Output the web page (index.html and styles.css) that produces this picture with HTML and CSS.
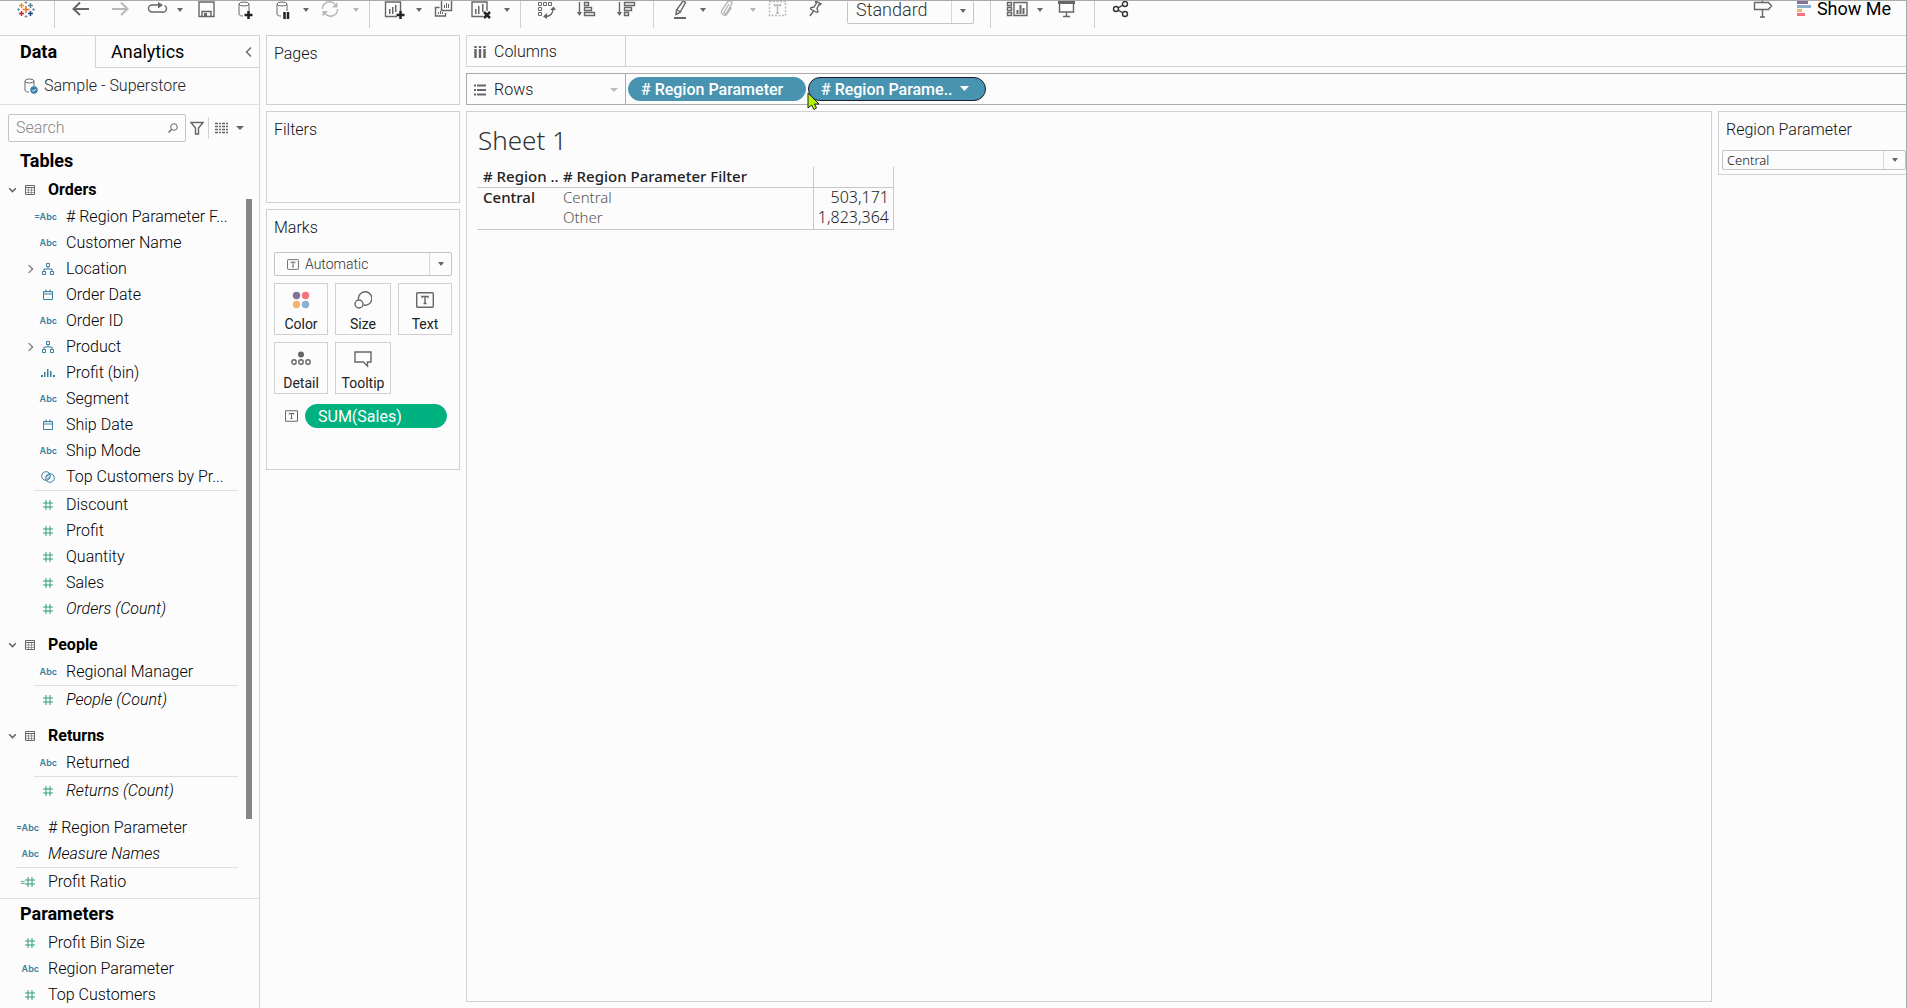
FILE: index.html
```
<!doctype html><html lang="en">
<head><meta charset="utf-8"/><title>Sheet 1</title>
<meta name="viewport" content="width=device-width, initial-scale=1">
<link rel="stylesheet" href="styles.css">
</head>
<body>

<!-- shared icons -->
<svg class="defs" aria-hidden="true">
	<symbol id="caret" viewBox="0 0 12 27"><path d="M2 7h6L5 11z"/></symbol>
	<symbol id="down" viewBox="0 0 8 6"><path d="M1 1l3 3 3-3" class="ln mid"/></symbol>
	<symbol id="table" viewBox="0 0 10 10"><path d="M.5.5h9v9h-9zM.5 2.500h9" class="ln"/><path d="M.5 5h9M.5 7.500h9M3.500 2.500v7M6.500 2.500v7" class="ln thin"/></symbol>
	<symbol id="hash" viewBox="0 0 12 12"><path d="M4 1v10M8 1v10M1 4h10M1 8h10" class="ln"/></symbol>
	<symbol id="date" viewBox="0 0 12 12"><path d="M1.500 2.500h9v8h-9zM1.500 5h9M4 .5v3M8 .5v3" class="ln"/></symbol>
	<symbol id="tree" viewBox="0 0 12 12"><path d="M4.500.5h3v3h-3zM.5 8.500h3v3h-3zM8.500 8.500h3v3h-3zM6 3.500V6M2 8.500V6h8v2.500" class="ln"/></symbol>
	<symbol id="bin" viewBox="0 0 14 12"><path d="M0 8h2v2H0zM3 5h1.500v5H3zM6 2h1.500v8H6zM9 4h1.500v6H9zM12 8h2v2h-2z"/></symbol>
	<symbol id="set" viewBox="0 0 14 12"><circle cx="5" cy="5" r="4.300" class="ln"/><circle cx="9" cy="7" r="4.300" class="ln"/><path d="M5 6l4-3M5.500 8.500l4-3" class="ln"/></symbol>
	<symbol id="txt" viewBox="0 0 18 16"><rect x=".7" y=".7" width="16.600" height="14.600" rx="1" class="ln mid"/><path d="M6 6V4.500h6V6M9 4.500v7M7.500 11.500h3" class="ln mid"/></symbol>
</svg>

<header class="toolbar">
	<div class="logo">
		<svg width="18" height="27" viewBox="0 0 18 27">
			<path d="M9 5v7M5.500 8.500h7" stroke="#e8762c" stroke-width="1.600"/>
			<path d="M4.500 2v5M2 4.500h5" stroke="#eb912c" stroke-width="1.500"/>
			<path d="M13.500 2v5M11 4.500h5" stroke="#5b879b" stroke-width="1.500"/>
			<path d="M4.500 10v5M2 12.500h5" stroke="#c72035" stroke-width="1.500"/>
			<path d="M13.500 10v5M11 12.500h5" stroke="#1f457e" stroke-width="1.500"/>
			<path d="M9 0v3M7.500 1.500h3M9 14v3M7.500 15.500h3M1.500 7v3M0 8.500h3M16.500 7v3M15 8.500h3" stroke="#7199a6"/>
		</svg>
	</div>
	<div class="group">
		<button type="button" class="tool" aria-label="Undo"><svg viewBox="0 0 38 27"><path d="M28 8H13M19 1.500L12.500 8l6.500 6" class="ln thick"/></svg></button>
		<button type="button" class="tool off" aria-label="Redo"><svg viewBox="0 0 38 27"><path d="M13 8h15M22 1.500L28.500 8 22 14" class="ln thick"/></svg></button>
		<button type="button" class="tool" aria-label="Replay"><svg viewBox="0 0 38 27"><path d="M23 4h-8a3.500 3.500 0 0 0 0 7h10a3.500 3.500 0 0 0 2.500-6.500" class="ln mid"/><path d="M21 1l5 3-5 3.500z"/></svg></button>
		<button type="button" class="more" aria-label="More"><svg viewBox="0 0 12 27"><use href="#caret"/></svg></button>
		<button type="button" class="tool" aria-label="Save"><svg viewBox="0 0 38 27"><path d="M12 1h15v14.500H12zM15 15.500v-5h9v5" class="ln mid"/><path d="M17 12h3v3h-3z"/></svg></button>
		<button type="button" class="tool" aria-label="New data source"><svg viewBox="0 0 38 27"><ellipse cx="19" cy="3" rx="5" ry="2" class="ln"/><path d="M14 3v10c0 1.500 2 2 4 2M24 3v7" class="ln"/><path d="M23.500 10v8M19.500 14h8" class="bold"/></svg></button>
		<button type="button" class="tool" aria-label="Pause updates"><svg viewBox="0 0 38 27"><ellipse cx="19" cy="3" rx="5" ry="2" class="ln"/><path d="M14 3v10c0 1.500 2 2 4 2M24 3v7" class="ln"/><path d="M21.500 11v7M25 11v7" class="bold"/></svg></button>
		<button type="button" class="more" aria-label="More"><svg viewBox="0 0 12 27"><use href="#caret"/></svg></button>
		<button type="button" class="tool off" aria-label="Refresh"><svg viewBox="0 0 38 27"><path d="M9.500 8a7 7 0 0 1 12.500-4.500M24.500 8a7 7 0 0 1-12.500 4.500" class="ln mid"/><path d="M24.500 1v5.500H19zM9.500 15.500V10H15z"/></svg></button>
		<button type="button" class="more off" aria-label="More"><svg viewBox="0 0 12 27"><use href="#caret"/></svg></button>
	</div>
	<div class="group">
		<button type="button" class="tool" aria-label="New worksheet"><svg viewBox="0 0 38 27"><path d="M21 15.500H9.500V1h15v9" class="ln mid"/><path d="M13 8h1.500v5H13zM16 6h1.500v7H16zM19 4h1.500v7H19z"/><path d="M24.500 10v8M20.500 14h8" class="bold"/></svg></button>
		<button type="button" class="more" aria-label="More"><svg viewBox="0 0 12 27"><use href="#caret"/></svg></button>
		<button type="button" class="tool" aria-label="Duplicate"><svg viewBox="0 0 38 27"><path d="M15.500 0v9.500h10V0M13.500 6.500h-4v8.500h10v-3" class="ln mid"/><path d="M18 4h1v3h-1zM20 2h1v5h-1zM22 3h1v4h-1zM12 11h1v2h-1zM14 10h1v3h-1zM16 11h1v2h-1z"/></svg></button>
		<button type="button" class="tool" aria-label="Clear sheet"><svg viewBox="0 0 38 27"><path d="M19 15.500H8V1h15v9" class="ln mid"/><path d="M11 8h1.500v5H11zM14 5h1.500v8H14zM18 3h1.500v8H18z"/><path d="M20 11l6 6M26 11l-6 6" class="bold"/></svg></button>
		<button type="button" class="more" aria-label="More"><svg viewBox="0 0 12 27"><use href="#caret"/></svg></button>
	</div>
	<div class="group wide">
		<button type="button" class="tool" aria-label="Swap rows and columns"><svg viewBox="0 0 40 27"><path d="M11.500 1.500h3v3h-3zM16.500 1.500h3v3h-3zM21.500 1.500h3v3h-3zM11.500 6.500h3v3h-3zM11.500 11.500h3v3h-3z" class="ln"/><path d="M18 15.500c5 0 8-2 8-8" class="ln mid"/><path d="M20 12v6l-4-2.500zM23 9h6l-2.500-3.500z"/></svg></button>
		<button type="button" class="tool" aria-label="Sort ascending"><svg viewBox="0 0 40 27"><path d="M12.500 1v12M17.500 1.500h4v3h-4zM17.500 6.500h7v3h-7zM17.500 11.500h10v3h-10z" class="ln mid"/><path d="M10 11h5l-2.500 4z"/></svg></button>
		<button type="button" class="tool" aria-label="Sort descending"><svg viewBox="0 0 40 27"><path d="M12.500 1v12M17.500 1.500h10v3h-10zM17.500 6.500h7v3h-7zM17.500 11.500h4v3h-4z" class="ln mid"/><path d="M10 11h5l-2.500 4z"/></svg></button>
	</div>
	<div class="group last">
		<button type="button" class="tool" aria-label="Highlight"><svg viewBox="0 0 38 27"><path d="M23 0l2.500 1.500-5.500 10-4 2 .5-4.500zM16.500 8.500l3.500 2" class="ln mid"/><path d="M14 16h12v2H14z"/></svg></button>
		<button type="button" class="more" aria-label="More"><svg viewBox="0 0 12 27"><use href="#caret"/></svg></button>
		<button type="button" class="tool off" aria-label="Group"><svg viewBox="0 0 38 27"><path d="M19 3l-4.500 7.500c-1 2 1 3 2 1.500l5-8.500c1.500-3-2.500-5-4-2.500L12 9c-2 4 3 7.500 5 4l4.500-6.500" class="ln mid"/></svg></button>
		<button type="button" class="more off" aria-label="More"><svg viewBox="0 0 12 27"><use href="#caret"/></svg></button>
		<button type="button" class="tool off" aria-label="Show labels"><svg viewBox="0 0 38 27"><path d="M9.500.5h16v14h-16z" class="ln mid" stroke-dasharray="2 1.500"/><path d="M14.500 5.500V4h6v1.500M17.500 4v8M16 12h3" class="ln mid"/></svg></button>
		<button type="button" class="tool" aria-label="Fix axes"><svg viewBox="0 0 38 27"><path d="M18 0l5 3-1 1-1-.5-2 4 1 3-1 1-6.500-3.500.5-1.500 3-.5 2.500-4-1-1zM15.500 10L12 15" class="ln mid"/></svg></button>
	</div>
	<span class="dropdown fit">
		<select aria-label="Fit"><option>Standard</option></select>
		<svg viewBox="0 0 8 6"><path d="M1 1h6L4 5z"/></svg>
	</span>
	<div class="group first">
		<button type="button" class="tool" aria-label="Show cards"><svg viewBox="0 0 38 27"><path d="M10.500 1.500h4v3h-4zM10.500 6.500h4v3h-4zM10.500 11.500h4v3h-4zM17 1.500h13v13H17z" class="ln mid"/><path d="M19.500 9h2v4h-2zM22.500 4h2v9h-2zM25.500 7h2v6h-2z"/></svg></button>
		<button type="button" class="more" aria-label="More"><svg viewBox="0 0 12 27"><use href="#caret"/></svg></button>
		<button type="button" class="tool" aria-label="Presentation mode"><svg viewBox="0 0 38 27"><path d="M11 0h17v3H11z"/><path d="M12.500 3v8h14V3M19.500 11v4.500M16 15.500h7" class="ln mid"/></svg></button>
	</div>
	<div class="group">
		<button type="button" class="tool" aria-label="Share"><svg viewBox="0 0 38 27" class="dark"><circle cx="15" cy="8" r="2.500" class="ln mid"/><circle cx="24" cy="3" r="2.500" class="ln mid"/><circle cx="24" cy="13" r="2.500" class="ln mid"/><path d="M17 7l5-3M17 9l5 3" class="ln mid"/></svg></button>
	</div>
	<button type="button" class="tool guide" aria-label="Guide"><svg viewBox="0 0 38 27"><path d="M10.500 1.500h14l3 3.500-3 3.500h-14zM18.500 0v1.500M18.500 8.500v8M16 16h5" class="ln mid"/></svg></button>
	<button type="button" class="show-me">
		<svg width="15" height="27" viewBox="0 0 15 27"><path fill="#85719a" d="M0 0h11v3H0z"/><path fill="#8bb0cf" d="M0 4h14v3H0z"/><path fill="#f5b56c" d="M0 8h5v3H0z"/><path fill="#f9717f" d="M0 12h8v3H0z"/></svg>
		Show Me
	</button>
</header>

<div class="workspace">
	<aside class="data-pane">
		<div class="tabs">
			<button type="button" class="tab on">Data</button>
			<button type="button" class="tab">Analytics <svg width="8" height="12" viewBox="0 0 8 12"><path d="M6 1.500L1.500 6 6 10.500" class="ln mid"/></svg></button>
		</div>
		<div class="source">
			<svg width="14" height="16" viewBox="0 0 14 16"><ellipse cx="5.500" cy="3" rx="4.500" ry="2" class="ln"/><path d="M1 3v9c0 1.500 2 2 4 2M10 3v5" class="ln"/><circle cx="10" cy="12" r="3.700" fill="#3a7fa8"/><path d="M8.300 12l1.300 1.300 2.200-2.300" fill="none" stroke="#fff"/></svg>
			Sample - Superstore
		</div>
		<div class="find">
			<div class="search">
				<input type="text" placeholder="Search" aria-label="Search">
				<svg width="10" height="10" viewBox="0 0 10 10"><circle cx="6" cy="4" r="3.300" class="ln"/><path d="M3.500 6.500L.5 9.500" class="ln mid"/></svg>
			</div>
			<button type="button" class="filter" aria-label="Filter"><svg width="14" height="14" viewBox="0 0 14 14"><path d="M1 1.500h12L8.500 7v6h-3V7z" class="ln mid"/></svg></button>
			<button type="button" class="view" aria-label="View as list">
				<svg width="13" height="12" viewBox="0 0 13 12"><path d="M0 1.500h13M0 4.500h13M0 7.500h13M0 10.500h13" class="ln mid" stroke-dasharray="3 1 2 1"/></svg>
				<svg width="8" height="6" viewBox="0 0 8 6"><path d="M0 1h8L4 5z"/></svg>
			</button>
		</div>

		<h2>Tables</h2>
		<div class="tables">
			<h3><svg class="tw"><use href="#down"/></svg><svg class="tb"><use href="#table"/></svg>Orders</h3>
			<ul class="fields">
				<li><i class="abc">=Abc</i># Region Parameter F...</li>
				<li><i class="abc">Abc</i>Customer Name</li>
				<li class="tree"><svg class="dim"><use href="#tree"/></svg>Location</li>
				<li><svg class="dim"><use href="#date"/></svg>Order Date</li>
				<li><i class="abc">Abc</i>Order ID</li>
				<li class="tree"><svg class="dim"><use href="#tree"/></svg>Product</li>
				<li><svg class="dim"><use href="#bin"/></svg>Profit (bin)</li>
				<li><i class="abc">Abc</i>Segment</li>
				<li><svg class="dim"><use href="#date"/></svg>Ship Date</li>
				<li><i class="abc">Abc</i>Ship Mode</li>
				<li><svg class="dim"><use href="#set"/></svg>Top Customers by Pr...</li>
			</ul>
			<ul class="fields measures">
				<li><svg class="mea"><use href="#hash"/></svg>Discount</li>
				<li><svg class="mea"><use href="#hash"/></svg>Profit</li>
				<li><svg class="mea"><use href="#hash"/></svg>Quantity</li>
				<li><svg class="mea"><use href="#hash"/></svg>Sales</li>
				<li><svg class="mea"><use href="#hash"/></svg><em>Orders (Count)</em></li>
			</ul>
			<h3><svg class="tw"><use href="#down"/></svg><svg class="tb"><use href="#table"/></svg>People</h3>
			<ul class="fields">
				<li><i class="abc">Abc</i>Regional Manager</li>
			</ul>
			<ul class="fields measures">
				<li><svg class="mea"><use href="#hash"/></svg><em>People (Count)</em></li>
			</ul>
			<h3><svg class="tw"><use href="#down"/></svg><svg class="tb"><use href="#table"/></svg>Returns</h3>
			<ul class="fields">
				<li><i class="abc">Abc</i>Returned</li>
			</ul>
			<ul class="fields measures">
				<li><svg class="mea"><use href="#hash"/></svg><em>Returns (Count)</em></li>
			</ul>
			<ul class="fields top loose">
				<li><i class="abc">=Abc</i># Region Parameter</li>
				<li><i class="abc">Abc</i><em>Measure Names</em></li>
			</ul>
			<ul class="fields top measures">
				<li class="calc"><svg class="mea"><use href="#hash"/></svg>Profit Ratio</li>
			</ul>
			<div class="thumb"></div>
		</div>

		<div class="params">
			<h2>Parameters</h2>
			<ul class="fields top">
				<li><svg class="mea"><use href="#hash"/></svg>Profit Bin Size</li>
				<li><i class="abc">Abc</i>Region Parameter</li>
				<li><svg class="mea"><use href="#hash"/></svg>Top Customers</li>
			</ul>
		</div>
	</aside>

	<div class="cards">
		<section class="card pages"><h4>Pages</h4></section>
		<section class="card filters"><h4>Filters</h4></section>
		<section class="card marks">
			<h4>Marks</h4>
			<span class="dropdown mark-type">
				<svg class="mark"><use href="#txt"/></svg>
				<select aria-label="Mark type"><option>Automatic</option></select>
				<svg viewBox="0 0 8 6"><path d="M1 1h6L4 5z"/></svg>
			</span>
			<div class="mark-grid">
				<button type="button"><svg width="18" height="18" viewBox="0 0 18 18"><circle cx="4.500" cy="4.500" r="3.700" fill="#85719a"/><circle cx="13.500" cy="4.500" r="3.700" fill="#f9717f"/><circle cx="4.500" cy="13.500" r="3.700" fill="#f5b56c"/><circle cx="13.500" cy="13.500" r="3.700" fill="#8bb0cf"/></svg>Color</button>
				<button type="button"><svg width="18" height="18" viewBox="0 0 18 18"><path d="M4.500 8.500a6.700 6.700 0 1 1 5 5.500" class="ln mid"/><circle cx="5" cy="13" r="4" class="ln mid"/></svg>Size</button>
				<button type="button"><svg width="18" height="18" viewBox="0 -1 18 18"><use href="#txt" width="18" height="16"/></svg>Text</button>
				<button type="button"><svg width="20" height="18" viewBox="0 0 20 18"><circle cx="10" cy="4.500" r="3"/><circle cx="3" cy="12" r="2.200" class="ln mid"/><circle cx="10" cy="12" r="2.200" class="ln mid"/><circle cx="17" cy="12" r="2.200" class="ln mid"/></svg>Detail</button>
				<button type="button"><svg width="18" height="18" viewBox="0 0 18 18"><path d="M1 2h16v10h-3.500v4l-4-4H1z" class="ln mid"/></svg>Tooltip</button>
			</div>
			<div class="encoding">
				<svg width="13" height="12"><use href="#txt"/></svg>
				<button type="button" class="pill green">SUM(Sales)</button>
			</div>
		</section>
	</div>

	<main class="view-area">
		<div class="shelf">
			<div class="shelf-name"><svg width="12" height="12" viewBox="0 0 12 12"><path d="M1.500 0v12M6 0v12M10.500 0v12" stroke="#666" stroke-width="2.500"/><path d="M0 2.500h12" stroke="#fcfcfc"/></svg>Columns</div>
		</div>
		<div class="shelf active">
			<div class="shelf-name"><svg width="12" height="12" viewBox="0 0 12 12"><path d="M0 1.500h12M0 6h12M0 10.500h12" stroke="#666" stroke-width="2"/><path d="M2.500 0v12" stroke="#fcfcfc"/></svg>Rows <svg class="end" width="8" height="6" viewBox="0 0 8 6"><path d="M0 1h8L4 5z"/></svg></div>
			<button type="button" class="pill"># Region Parameter</button>
			<button type="button" class="pill hot"># Region Parame.. <svg width="9" height="6" viewBox="0 0 9 6"><path d="M0 0h9L4.500 5z"/></svg>
				<svg class="cursor" viewBox="0 0 13 18"><path d="M1 1v15l3.500-3 2.500 4.500 2.500-1.500L7.500 12H12z" fill="#b6f500" stroke="#222"/></svg>
			</button>
		</div>

		<div class="row">
			<section class="sheet">
				<h1>Sheet 1</h1>
				<table>
					<colgroup><col class="c1"><col class="c2"><col class="c3"></colgroup>
					<thead><tr><th># Region ..</th><th># Region Parameter Filter</th><td></td></tr></thead>
					<tbody>
						<tr><th rowspan="2">Central</th><td>Central</td><td class="num">503,171</td></tr>
						<tr><td>Other</td><td class="num">1,823,364</td></tr>
					</tbody>
				</table>
			</section>
			<section class="param">
				<label for="region">Region Parameter</label>
				<span class="dropdown">
					<select id="region"><option>Central</option></select>
					<svg viewBox="0 0 8 6"><path d="M1 1h6L4 5z"/></svg>
				</span>
			</section>
		</div>
	</main>
</div>

</body></html>
```
FILE: styles.css
```
* {box-sizing: border-box;}
html {height: 100%;}
body {
	margin: 0;
	min-height: 100%;
	display: flex;
	flex-direction: column;
	background: #fcfcfc;
	border: solid #a9a9a9;
	border-width: 1px 1px 1px 0;
	color: #000;
	font: 300 16px/26px Roboto, "Liberation Sans", sans-serif;
}
h1, h2, h3, h4, ul {margin: 0; padding: 0;}
ul {list-style: none;}
button {
	margin: 0;
	padding: 0;
	border: 0;
	background: none;
	color: inherit;
	font: inherit;
}
svg {fill: #666; flex: none;}
.ln {fill: none; stroke: #666; stroke-width: 1;}
.thin {stroke-width: .6;}
.mid {stroke-width: 1.4;}
.thick {stroke-width: 2;}
.bold {fill: none; stroke: #222; stroke-width: 2.5;}
.defs {position: absolute; width: 0; height: 0;}

/* toolbar */
.toolbar {
	display: flex;
	height: 34px;
	padding-bottom: 7px;
}
.logo {width: 54px; padding-left: 17px;}
.group {
	display: flex;
	padding: 0 6px;
	border-left: 1px solid #d0d0d0;
}
.group.first {margin-left: 16px;}
.group.last {padding-right: 11px;}
.group.first {padding-right: 9px;}
.tool {width: 38px; height: 27px;}
.wide .tool {width: 40px;}
.more {width: 12px; height: 27px;}
.tool svg, .more svg, .logo svg {display: block; width: 100%; height: 27px;}
.logo svg {width: 18px;}
.off {opacity: .45;}
.dark .ln {stroke: #333;}
.guide {margin-left: auto;}
.show-me {
	display: flex;
	gap: 5px;
	margin: 0 15px 0 15px;
	font-size: 18px;
	line-height: 16px;
	font-weight: 400;
}

/* select with a drawn arrow */
.dropdown {position: relative; display: block;}
.dropdown select {
	display: block;
	width: 100%;
	appearance: none;
	border: 1px solid #c4c4c4;
	border-radius: 2px;
	background: linear-gradient(#d8d8d8, #d8d8d8) right 21px top / 1px 100% no-repeat;
	color: #333;
	font: inherit;
}
.dropdown svg:last-child {
	position: absolute;
	right: 7px;
	top: 50%;
	width: 8px;
	height: 6px;
	margin-top: -3px;
}
.fit {width: 127px; height: 23px;}
.fit select {
	height: 23px;
	padding: 0 8px 5px;
	border-top: 0;
	font-size: 18px;
	line-height: 18px;
}
.fit svg:last-child {margin-top: -5px;}

/* columns below the toolbar */
.workspace {display: flex; flex: 1;}

.data-pane {
	width: 260px;
	display: flex;
	flex-direction: column;
	border: solid #d4d4d4;
	border-width: 1px 1px 0 0;
}
.tabs {display: flex; height: 32px;}
.tab {
	display: flex;
	flex: 1;
	align-items: center;
	justify-content: space-between;
	padding: 0 6px 0 15px;
	border: solid #d4d4d4;
	border-width: 0 0 1px 1px;
	font-size: 18px;
	font-weight: 400;
}
.tab.on {
	flex: 0 0 95px;
	padding-left: 20px;
	border: 0;
	font-weight: 700;
}
.source {
	display: flex;
	align-items: center;
	gap: 6px;
	height: 37px;
	padding-left: 24px;
	border-bottom: 1px solid #e0e0e0;
	color: #222;
}
.find {
	display: flex;
	align-items: center;
	gap: 4px;
	padding: 9px 8px 0;
}
.search {
	display: flex;
	align-items: center;
	width: 178px;
	height: 28px;
	padding: 0 7px;
	border: 1px solid #c4c4c4;
	border-radius: 2px;
}
.search input {
	flex: 1;
	min-width: 0;
	padding: 0;
	border: 0;
	outline: 0;
	background: none;
	font: inherit;
}
.search input::placeholder {color: #888;}
.filter svg {display: block;}
.view {
	display: flex;
	align-items: center;
	gap: 8px;
	height: 22px;
	padding-left: 6px;
	border-left: 1px solid #d4d4d4;
}
.data-pane h2 {
	height: 35px;
	padding: 6px 0 0 20px;
	font-size: 18px;
	font-weight: 700;
}
.tables {position: relative; padding-bottom: 3px;}
.data-pane h3 {
	display: flex;
	align-items: center;
	height: 27px;
	margin-top: 10px;
	padding: 0 0 1px 8px;
	font-size: 16px;
	font-weight: 700;
}
.tables h3:first-child {margin-top: 0;}
.tw {width: 9px; height: 7px; margin-right: 8px;}
.tb {width: 10px; height: 10px; margin-right: 13px;}
.fields {margin: 0 21px 0 34px;}
.fields.top {margin-left: 16px;}
.fields li {
	position: relative;
	display: flex;
	align-items: center;
	height: 26px;
	white-space: nowrap;
}
.mea {width: 12px; height: 12px; margin: 0 12px 0 8px;}
.dim {width: 14px; height: 12px; margin: 0 11px 0 7px;}
.dim {fill: #3a7fa0; color: #3a7fa0;}
.mea {color: #2f9e70;}
.tw, .tb, .mark, .encoding svg, .mark-grid svg {color: #666;}
symbol .ln {stroke: currentColor;}
.abc {
	flex: none;
	width: 23px;
	margin-right: 9px;
	color: #3a7fa0;
	font: 600 9px/26px Inter, sans-serif;
	text-align: right;
}
.loose {padding-top: 11px;}
.measures {border-top: 1px solid #e0e0e0; padding-top: 1px;}
.tree::before {
	content: "";
	position: absolute;
	left: -8px;
	width: 5px;
	height: 5px;
	border: solid #666;
	border-width: 1px 1px 0 0;
	transform: rotate(45deg);
}
.calc::before {
	content: "=";
	position: absolute;
	left: 4px;
	color: #2f9e70;
	font: 600 8px/24px Inter, sans-serif;
}
.thumb {
	position: absolute;
	top: 22px;
	right: 7px;
	width: 6px;
	height: 620px;
	background: #868686;
}
.params {border-top: 1px solid #e0e0e0;}
.params h2 {height: 31px; padding-top: 2px;}

/* cards */
.cards {
	width: 194px;
	display: flex;
	flex-direction: column;
	gap: 6px;
	margin: 0 6px;
}
.card {border: 1px solid #d0d0d0;}
.card h4 {
	padding: 5px 7px;
	color: #111;
	font-size: 16px;
	font-weight: 300;
}
.pages {height: 70px;}
.filters {height: 92px;}
.marks {height: 261px; padding: 0 7px;}
.marks h4 {padding: 5px 0 11px 0;}
.mark-type select {
	height: 24px;
	padding: 0 30px;
	font-size: 14px;
	line-height: 22px;
}
.mark-type .mark {
	position: absolute;
	left: 13px;
	top: 7px;
	width: 12px;
	height: 11px;
}
.mark-grid {
	display: grid;
	grid-template-columns: 54px 56px 54px;
	gap: 7px;
	padding: 7px 0 10px;
}
.mark-grid button {
	display: flex;
	flex-direction: column;
	align-items: center;
	gap: 5px;
	height: 52px;
	padding-top: 7px;
	border: 1px solid #d0d0d0;
	font-size: 14px;
	font-weight: 400;
	line-height: 20px;
	color: #222;
}
.encoding {
	display: flex;
	align-items: center;
	gap: 7px;
	padding: 0 5px 0 11px;
}

.pill {
	display: flex;
	align-items: center;
	width: 178px;
	height: 24px;
	padding: 1px 12px 0;
	border: 1px solid #4894b0;
	border-radius: 12px;
	background: #4894b0;
	color: #fff;
	font-weight: 500;
	white-space: nowrap;
}
.pill svg {margin: 0 0 2px 7px; fill: #fff;}
.pill.hot {position: relative; border-color: #1c1c30;}
.pill.green {flex: 1; border-color: #00b180; background: #00b180; font-weight: 400;}
.pill .cursor {
	position: absolute;
	left: -2px;
	top: 14px;
	width: 13px;
	height: 18px;
	margin: 0;
}

/* shelves and sheet */
.view-area {
	flex: 1;
	display: flex;
	flex-direction: column;
	gap: 6px;
}
.shelf {
	display: flex;
	align-items: center;
	gap: 2px;
	height: 32px;
	border: 1px solid #d4d4d4;
	border-right: 0;
}
.shelf.active {border-color: #acacac;}
.shelf-name {
	display: flex;
	align-items: center;
	gap: 8px;
	width: 159px;
	height: 30px;
	padding: 1px 7px 0;
	border-right: 1px solid #d0d0d0;
	color: #111;
}
.active .shelf-name {border-color: #acacac;}
.shelf-name .end {margin-left: auto; fill: #bbb;}
.row {display: flex; flex: 1; gap: 6px;}
.sheet {
	flex: 1;
	margin-bottom: 6px;
	padding: 11px 10px;
	border: 1px solid #d0d0d0;
}
.sheet h1 {
	padding-left: 1px;
	color: #333;
	font: 300 26px/34px "Noto Sans", sans-serif;
}
.sheet table {
	margin-top: 10px;
	border-collapse: collapse;
	table-layout: fixed;
	width: 417px;
	font: 300 15px/19px "Noto Sans", sans-serif;
}
.c1 {width: 80px;}
.c2 {width: 256px;}
.sheet th, .sheet td {
	height: 21px;
	padding: 0 0 0 6px;
	text-align: left;
	vertical-align: top;
	white-space: nowrap;
}
.sheet thead th, .sheet thead td {height: 20px;}
.sheet th {color: #222; font-weight: 500;}
.sheet thead, .sheet tbody {border-bottom: 1px solid #c8c8c8;}
.sheet tr > td:last-child {border: solid #c8c8c8; border-width: 0 1px;}
.sheet tbody td {color: #555;}
.sheet tbody .num {
	padding: 0 4px 0 0;
	color: #222;
	font-size: 16px;
	text-align: right;
}
.param {
	width: 188px;
	height: 64px;
	padding: 5px 0 0 3px;
	border: 1px solid #d0d0d0;
	border-right: 0;
}
.param label {
	display: block;
	padding: 0 0 7px 4px;
	color: #111;
}
.param select {
	height: 20px;
	padding: 0 4px;
	color: #111;
	font: 300 13px/18px "Noto Sans", sans-serif;
}
```
